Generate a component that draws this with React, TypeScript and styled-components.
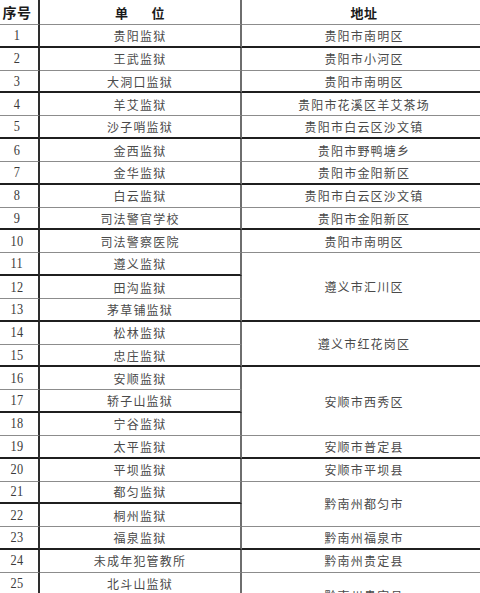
import * as React from 'react'
import styled, { createGlobalStyle, css } from 'styled-components'

const GlobalStyle = createGlobalStyle`
  html, body {
    margin: 0;
    padding: 0;
    background: #fff;
    overflow: hidden;
  }
  body {
    font-family: "Noto Sans CJK SC", "Noto Sans", sans-serif;
    color: #4a4a4a;
  }
`

type Row = { no: number; unit: string }
type Place = { name: string; span: number }

const ROWS: Row[] = [
  { no: 1, unit: '贵阳监狱' },
  { no: 2, unit: '王武监狱' },
  { no: 3, unit: '大洞口监狱' },
  { no: 4, unit: '羊艾监狱' },
  { no: 5, unit: '沙子哨监狱' },
  { no: 6, unit: '金西监狱' },
  { no: 7, unit: '金华监狱' },
  { no: 8, unit: '白云监狱' },
  { no: 9, unit: '司法警官学校' },
  { no: 10, unit: '司法警察医院' },
  { no: 11, unit: '遵义监狱' },
  { no: 12, unit: '田沟监狱' },
  { no: 13, unit: '茅草铺监狱' },
  { no: 14, unit: '松林监狱' },
  { no: 15, unit: '忠庄监狱' },
  { no: 16, unit: '安顺监狱' },
  { no: 17, unit: '轿子山监狱' },
  { no: 18, unit: '宁谷监狱' },
  { no: 19, unit: '太平监狱' },
  { no: 20, unit: '平坝监狱' },
  { no: 21, unit: '都匀监狱' },
  { no: 22, unit: '桐州监狱' },
  { no: 23, unit: '福泉监狱' },
  { no: 24, unit: '未成年犯管教所' },
  { no: 25, unit: '北斗山监狱' },
  { no: 26, unit: '' },
]

const PLACES: Place[] = [
  { name: '贵阳市南明区', span: 1 },
  { name: '贵阳市小河区', span: 1 },
  { name: '贵阳市南明区', span: 1 },
  { name: '贵阳市花溪区羊艾茶场', span: 1 },
  { name: '贵阳市白云区沙文镇', span: 1 },
  { name: '贵阳市野鸭塘乡', span: 1 },
  { name: '贵阳市金阳新区', span: 1 },
  { name: '贵阳市白云区沙文镇', span: 1 },
  { name: '贵阳市金阳新区', span: 1 },
  { name: '贵阳市南明区', span: 1 },
  { name: '遵义市汇川区', span: 3 },
  { name: '遵义市红花岗区', span: 2 },
  { name: '安顺市西秀区', span: 3 },
  { name: '安顺市普定县', span: 1 },
  { name: '安顺市平坝县', span: 1 },
  { name: '黔南州都匀市', span: 2 },
  { name: '黔南州福泉市', span: 1 },
  { name: '黔南州贵定县', span: 1 },
  { name: '黔南州贵定县', span: 2 },
]

const Sheet = styled.div`
  display: grid;
  width: 492px;
  grid-template-columns: 40px 202px 250px;
  grid-template-rows: 25px repeat(26, 22.83px);
  grid-auto-flow: row;
`

const lineDark = css`
  border-bottom: 2px solid #1f1f1f;
`
const lineLight = css`
  border-bottom: 1.5px solid #8c8c8c;
`

const Cell = styled.div<{ $col: 1 | 2 | 3; $span?: number; $dark: boolean }>`
  box-sizing: border-box;
  grid-column: ${(p) => p.$col};
  grid-row: span ${(p) => p.$span ?? 1};
  display: flex;
  align-items: center;
  justify-content: center;
  font-size: 12px;
  letter-spacing: 1.2px;
  white-space: nowrap;
  ${(p) => (p.$dark ? lineDark : lineLight)}
  ${(p) =>
    p.$col === 1 &&
    css`
      border-right: 2px solid #2e2e2e;
      padding-right: 4px;
    `}
  ${(p) =>
    p.$col === 2 &&
    css`
      border-right: 2px solid #6e6e6e;
    `}
  ${(p) =>
    p.$col === 3 &&
    css`
      padding-right: 6px;
    `}
`

const Num = styled.span`
  font-family: "Liberation Serif", "DejaVu Serif", serif;
  font-size: 15px;
  letter-spacing: 0.5px;
  transform: scaleX(0.82);
  color: #3a3a3a;
`

const HeadCell = styled(Cell)`
  font-weight: 700;
  font-size: 13px;
  color: #1a1a1a;
  letter-spacing: 0.5px;
  gap: 23px;
`

const HeadNo = styled.span`
  font-size: 14px;
  letter-spacing: 0.5px;
`

export default function App() {
  let placeRow = 0
  const placeAt = new Map<number, Place>()
  PLACES.forEach((p) => {
    placeAt.set(placeRow, p)
    placeRow += p.span
  })

  return (
    <>
      <GlobalStyle />
      <Sheet>
        <HeadCell $col={1} $dark={false}>
          <HeadNo>序号</HeadNo>
        </HeadCell>
        <HeadCell $col={2} $dark={false}>
          <span>单</span>
          <span>位</span>
        </HeadCell>
        <HeadCell $col={3} $dark={false}>
          地址
        </HeadCell>

        {ROWS.map((r, i) => {
          const place = placeAt.get(i)
          const dark = r.no % 2 === 1
          return (
            <React.Fragment key={r.no}>
              <Cell $col={1} $dark={dark}>
                <Num>{r.no}</Num>
              </Cell>
              <Cell $col={2} $dark={dark}>
                {r.unit}
              </Cell>
              {place && (
                <Cell $col={3} $span={place.span} $dark={(r.no + place.span - 1) % 2 === 1}>
                  {place.name}
                </Cell>
              )}
            </React.Fragment>
          )
        })}
      </Sheet>
    </>
  )
}
